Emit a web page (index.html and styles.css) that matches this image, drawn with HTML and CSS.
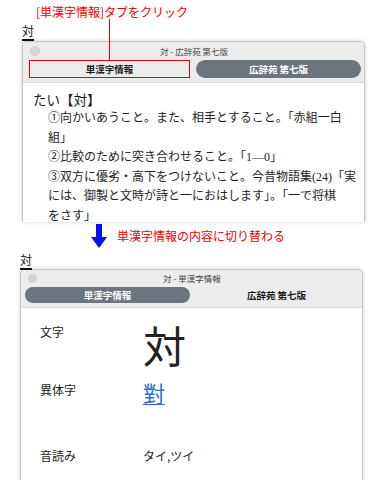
FILE: index.html
```html
<!DOCTYPE html>
<html lang="ja">
<head>
<meta charset="utf-8">
<title>単漢字情報</title>
<link rel="stylesheet" href="styles.css">
</head>
<body>
<div class="page">
  <div class="note note-top">[単漢字情報]タブをクリック</div>
  <div class="pointer-line"></div>

  <div class="doc-tab"><span class="doc-tab-label">対</span></div>
  <div class="window w1">
    <div class="titlebar">
      <div class="title-row">
        <span class="dot"></span>
        <span class="title">対 - 広辞苑 第七版</span>
        <span></span>
      </div>
      <div class="tabs">
        <div class="tab plain annot">単漢字情報</div>
        <div class="tab pill">広辞苑 第七版</div>
      </div>
    </div>
    <div class="content dict">
      <div class="headword">たい【対】</div>
      <p class="sense">①向かいあうこと。また、相手とすること。「赤組一白<br>組」</p>
      <p class="sense">②比較のために突き合わせること。「1—0」</p>
      <p class="sense">③双方に優劣・高下をつけないこと。今昔物語集(24)「実<br>には、御製と文時が詩と一におはします」。「一で将棋<br>をさす」</p>
    </div>
  </div>

  <div class="transition">
    <svg class="arrow" width="16" height="24" viewBox="0 0 16 24"><path d="M5 0H11V13H16L8 24L0 13H5Z" fill="#0010f0"/></svg>
    <span class="note">単漢字情報の内容に切り替わる</span>
  </div>

  <div class="doc-tab second"><span class="doc-tab-label">対</span></div>
  <div class="window w2">
    <div class="titlebar">
      <div class="title-row">
        <span class="dot"></span>
        <span class="title">対 - 単漢字情報</span>
        <span></span>
      </div>
      <div class="tabs">
        <div class="tab pill">単漢字情報</div>
        <div class="tab plain">広辞苑 第七版</div>
      </div>
    </div>
    <div class="content kanji">
      <div class="kanji-row row-char">
        <div class="label">文字</div>
        <div class="big-char">対</div>
      </div>
      <div class="kanji-row row-variant">
        <div class="label">異体字</div>
        <div class="variant"><a class="variant-link" href="#">對</a></div>
      </div>
      <div class="kanji-row row-on">
        <div class="label">音読み</div>
        <div class="value">タイ,ツイ</div>
      </div>
    </div>
  </div>
</div>
</body>
</html>
```

FILE: styles.css
```css
html, body {
  margin: 0;
  padding: 0;
  background: #ffffff;
  overflow: hidden;
}

body {
  font-family: "Noto Sans CJK JP", "Noto Sans", sans-serif;
  color: #222;
}

.page {
  position: relative;
  width: 389px;
  height: 480px;
  padding-top: 4px;
  box-sizing: border-box;
}

.note {
  color: #f00000;
  font-size: 12px;
  line-height: 16px;
  white-space: nowrap;
}

.note-top {
  margin-left: 36px;
}

.pointer-line {
  position: absolute;
  left: 109px;
  top: 19px;
  width: 1px;
  height: 41px;
  background: #f00000;
}

.doc-tab {
  margin-left: 22px;
  margin-top: 3px;
  height: 18px;
  display: flex;
}

.doc-tab-label {
  font-size: 12px;
  line-height: 16px;
  color: #111;
  border-bottom: 2px solid #111;
  height: 16px;
}

.doc-tab.second {
  margin-left: 20px;
  margin-top: 4px;
  height: 17px;
}

.window {
  width: 343px;
  box-sizing: border-box;
  border: 1px solid #c6c6c6;
  border-radius: 5px 5px 0 0;
  box-shadow: 0 0 4px rgba(0, 0, 0, 0.18);
  background: #fff;
  overflow: hidden;
}

.w1 {
  margin-left: 22px;
  height: 181px;
  border-bottom: none;
}

.w2 {
  margin-left: 20px;
  height: 220px;
  margin-top: 0;
}

.titlebar {
  background: #ececec;
  border-bottom: 1px solid #dadada;
  padding: 0 3px 4px 4px;
}

.title-row {
  display: grid;
  grid-template-columns: 20px 1fr 20px;
  align-items: center;
  height: 15px;
  padding-top: 1px;
}

.w2 .title-row {
  height: 14px;
  padding-top: 1px;
}

.dot {
  width: 10px;
  height: 10px;
  border-radius: 50%;
  background: #d6d6d6;
  border: 1px solid #cdcdcd;
  box-sizing: border-box;
  margin-left: 3px;
}

.w2 .dot {
  width: 9px;
  height: 9px;
}

.title {
  text-align: center;
  font-size: 8.5px;
  color: #444;
  line-height: 12px;
}

.tabs {
  display: grid;
  grid-template-columns: 1fr 1fr;
  column-gap: 4px;
  margin-top: 2px;
}

.w2 .tabs {
  margin-top: 2px;
}

.tab {
  height: 18px;
  display: flex;
  align-items: center;
  justify-content: center;
  font-size: 9.5px;
  font-weight: 700;
  color: #1a1a1a;
}

.w2 .tab {
  height: 16px;
}

.tab.pill {
  background: #6c757d;
  color: #fff;
  border-radius: 9px;
}

.tab.annot {
  box-shadow: inset 0 0 0 1px #f00000;
  margin: 0 2px;
}

.content.dict {
  padding: 6px 10px 0 10px;
  font-family: "Liberation Serif", "Noto Sans CJK JP", serif;
}

.headword {
  font-family: "Noto Sans CJK JP", sans-serif;
  font-size: 13.5px;
  line-height: 20px;
  color: #1a1a1a;
}

.sense {
  margin: 0 0 0 15px;
  font-size: 12px;
  line-height: 19.6px;
  color: #1f1f1f;
  white-space: nowrap;
}

.content.kanji {
  padding: 12px 0 0 19px;
}

.kanji-row {
  display: grid;
  grid-template-columns: 103px 1fr;
  align-items: start;
}

.label {
  font-size: 12px;
  line-height: 16px;
  color: #222;
}

.row-char .label {
  margin-top: 4px;
}

.big-char {
  font-size: 43px;
  line-height: 48px;
  color: #222;
}

.row-variant {
  margin-top: 11px;
}

.row-variant .label {
  margin-top: 3px;
}

.variant {
  font-size: 22px;
  line-height: 26px;
}

.variant-link {
  color: #2c6fd0;
  text-decoration: underline;
  text-decoration-thickness: 1px;
  text-underline-offset: 2px;
}

.row-on {
  margin-top: 43px;
}

.value {
  font-size: 12px;
  line-height: 16px;
  color: #222;
}

.transition {
  display: flex;
  align-items: center;
  gap: 10px;
  margin-left: 91px;
  margin-top: 2px;
  height: 24px;
}

.arrow {
  display: block;
  flex: none;
}
```
